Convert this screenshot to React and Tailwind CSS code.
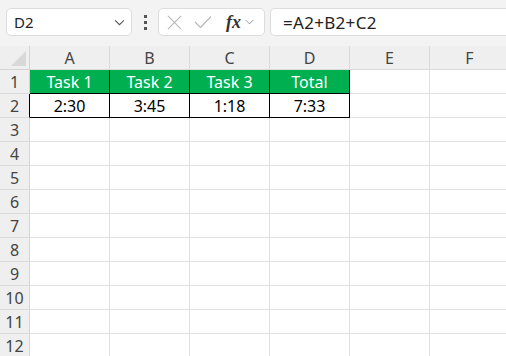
import React from "react";

const cols = ["A", "B", "C", "D", "E", "F"];
const data = {
  1: ["Task 1", "Task 2", "Task 3", "Total"],
  2: ["2:30", "3:45", "1:18", "7:33"],
};

function Chevron({ className }) {
  return (
    <svg viewBox="0 0 12 8" className={className} fill="none" stroke="currentColor" strokeWidth="1.2">
      <path d="M1 1.5 L6 6.5 L11 1.5" />
    </svg>
  );
}

export default function App() {
  const rows = Array.from({ length: 12 }, (_, i) => i + 1);
  return (
    <div className="w-[506px] h-[356px] overflow-hidden bg-white" style={{ fontFamily: '"Noto Sans", "Open Sans", sans-serif' }}>
      {/* Toolbar */}
      <div className="h-[46px] bg-[#f3f3f3] flex items-start pt-[8px] pl-[6px] gap-0">
        <div className="w-[126px] h-[28px] bg-white border border-[#dcdcdc] rounded-[5px] flex items-center justify-between pl-[7px] pr-[6px]">
          <span className="text-[15px] text-[#222] leading-none">D2</span>
          <Chevron className="w-[11px] h-[7px] text-[#555]" />
        </div>
        <div className="w-[26px] h-[28px] flex flex-col items-center justify-center gap-[3px]">
          <span className="w-[3px] h-[3px] bg-[#555]"></span>
          <span className="w-[3px] h-[3px] bg-[#555]"></span>
          <span className="w-[3px] h-[3px] bg-[#555]"></span>
        </div>
        <div className="w-[107px] h-[28px] bg-white border border-[#dcdcdc] rounded-[5px] flex items-center pl-[8px]">
          <svg viewBox="0 0 16 16" className="w-[15px] h-[15px] text-[#b5b5b5]" fill="none" stroke="currentColor" strokeWidth="1.1">
            <path d="M1 1 L15 15 M15 1 L1 15" />
          </svg>
          <svg viewBox="0 0 18 14" className="w-[18px] h-[14px] ml-[12px] text-[#b5b5b5]" fill="none" stroke="currentColor" strokeWidth="1.1">
            <path d="M1 7 L6.5 12.5 L17 1.5" />
          </svg>
          <span className="ml-[14px] text-[18px] italic font-bold text-[#333] leading-none" style={{ fontFamily: '"Liberation Serif", "DejaVu Serif", serif' }}>fx</span>
          <Chevron className="w-[9px] h-[6px] ml-[4px] text-[#888]" />
        </div>
        <div className="ml-[5px] flex-1 h-[28px] bg-white border border-[#dcdcdc] border-r-0 rounded-l-[5px] flex items-center pl-[12px]">
          <span className="text-[17px] text-[#222] leading-none tracking-[0.3px]">=A2+B2+C2</span>
        </div>
      </div>

      {/* Grid */}
      <div className="grid grid-cols-[30px_80px_80px_80px_80px_80px_80px] auto-rows-[24px] w-[510px]">
        <div className="relative bg-[#efefef] border-r border-b border-[#d4d4d4]">
          <svg viewBox="0 0 16 16" className="absolute right-[3px] bottom-[3px] w-[15px] h-[15px]">
            <path d="M16 0 L16 16 L0 16 Z" fill="#d8d8d8" />
          </svg>
        </div>
        {cols.map((c) => (
          <div key={c} className="bg-[#efefef] border-r border-b border-[#dadada] flex items-center justify-center text-[16px] text-[#444]">
            {c}
          </div>
        ))}
        {rows.map((r) => (
          <React.Fragment key={r}>
            <div className={`bg-[#efefef] border-r border-b border-b-[#dadada] flex items-center justify-center text-[16px] text-[#444] ${r === 2 ? "border-r-black" : "border-r-[#d4d4d4]"}`}>
              {r}
            </div>
            {cols.map((c, ci) => {
              const inTable = ci < 4 && (r === 1 || r === 2);
              if (inTable) {
                const header = r === 1;
                return (
                  <div
                    key={c}
                    className={`border-r border-b border-black flex items-center justify-center text-[16px] ${header ? "bg-[#00b050] text-white" : "bg-white text-black"}`}
                  >
                    {data[r][ci]}
                  </div>
                );
              }
              return <div key={c} className="border-r border-b border-[#e1e1e1]"></div>;
            })}
          </React.Fragment>
        ))}
      </div>
    </div>
  );
}
